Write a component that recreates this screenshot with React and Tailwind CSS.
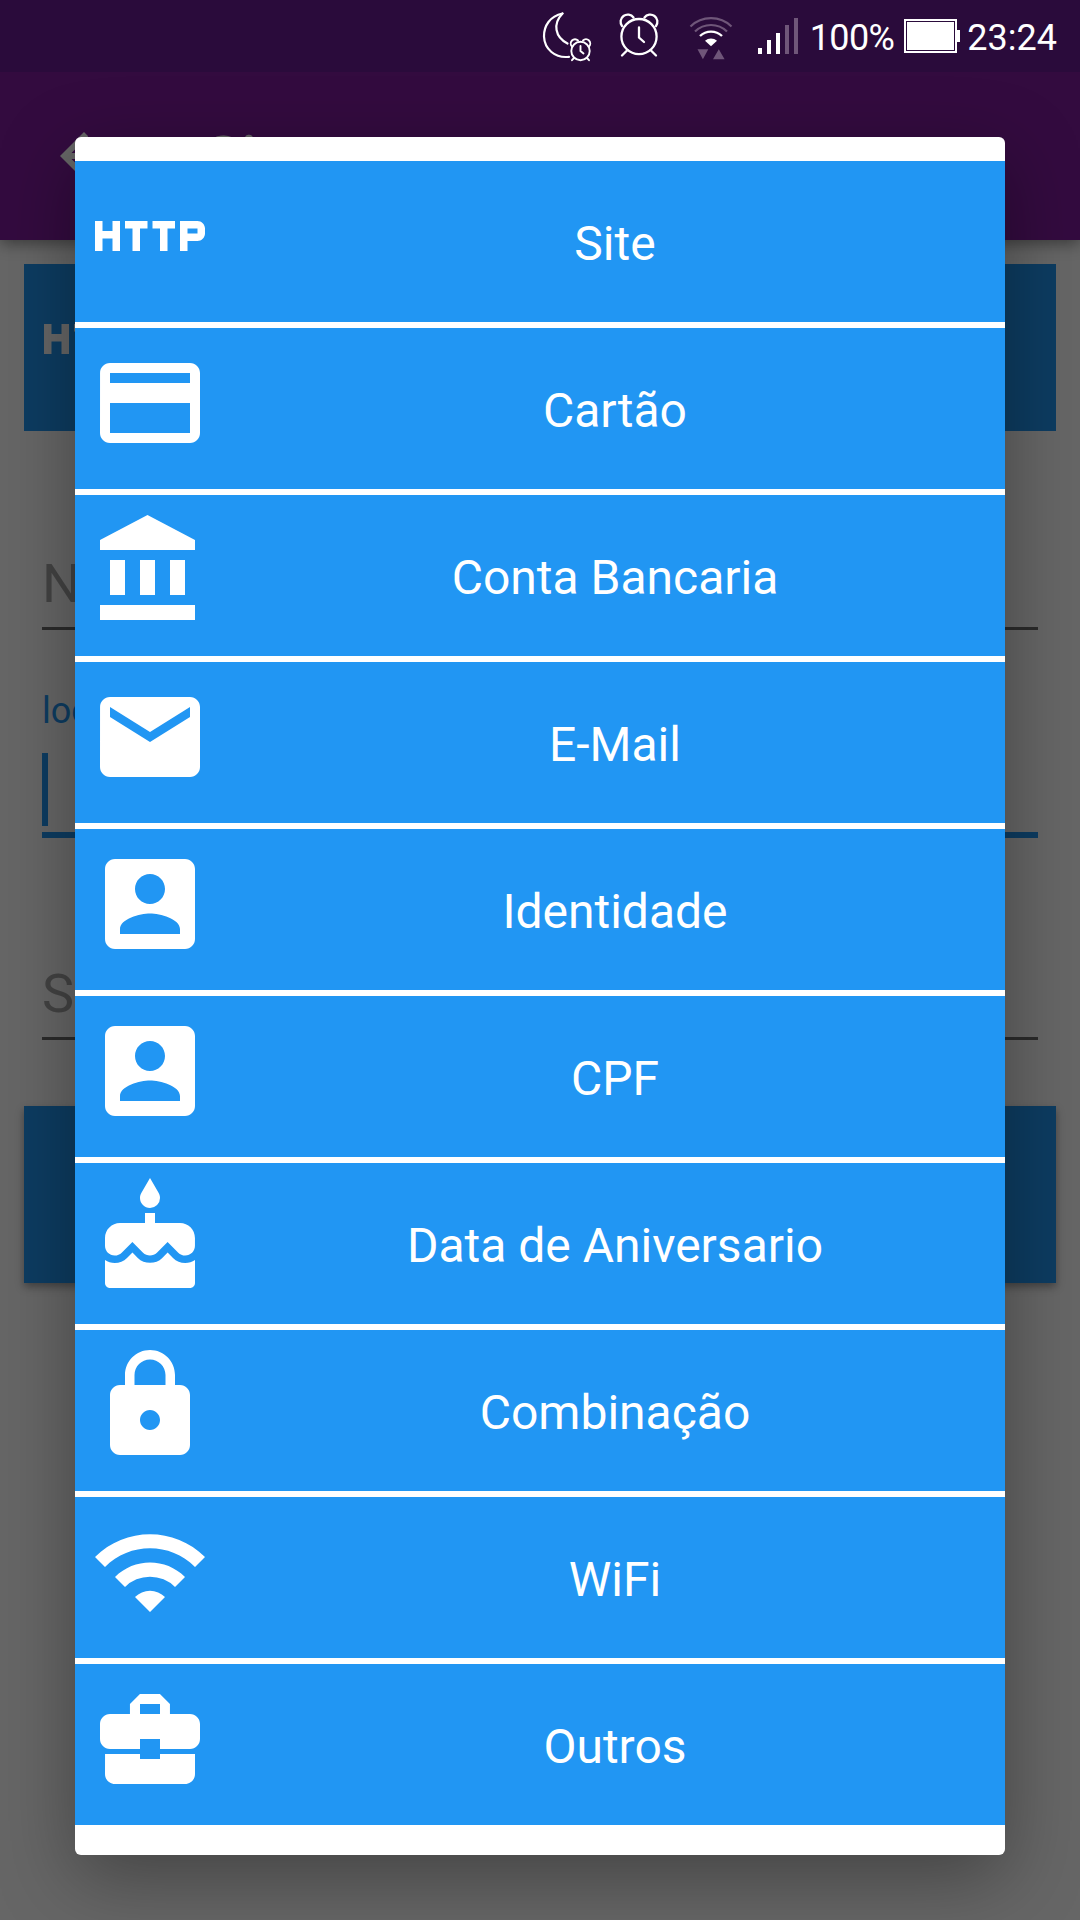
import {
  MdArrowBack,
  MdBusinessCenter,
  MdCake,
  MdCreditCard,
  MdEmail,
  MdHttp,
  MdLock,
  MdWifi,
} from 'react-icons/md';

function BankIcon({ className }) {
  return (
    <svg className={className} viewBox="0 0 24 24" fill="currentColor">
      <path d="M4 10v7h3v-7H4zm6 0v7h3v-7h-3zM2 22h19v-3H2v3zm14-12v7h3v-7h-3zm-4.500-9L2 6v2h19V6l-9.500-5z" />
    </svg>
  );
}

function AccountBoxIcon({ className }) {
  return (
    <svg className={className} viewBox="0 0 24 24" fill="currentColor">
      <path d="M3 5v14c0 1.100.890 2 2 2h14c1.100 0 2-.900 2-2V5c0-1.100-.900-2-2-2H5c-1.110 0-2 .900-2 2zm12 4c0 1.660-1.340 3-3 3s-3-1.340-3-3 1.340-3 3-3 3 1.340 3 3zm-9 8c0-2 4-3.100 6-3.100s6 1.100 6 3.100v1H6v-1z" />
    </svg>
  );
}

const options = [
  { label: 'Site', icon: MdHttp },
  { label: 'Cartão', icon: MdCreditCard },
  { label: 'Conta Bancaria', icon: BankIcon },
  { label: 'E-Mail', icon: MdEmail },
  { label: 'Identidade', icon: AccountBoxIcon },
  { label: 'CPF', icon: AccountBoxIcon },
  { label: 'Data de Aniversario', icon: MdCake },
  { label: 'Combinação', icon: MdLock },
  { label: 'WiFi', icon: MdWifi },
  { label: 'Outros', icon: MdBusinessCenter },
];

function MoonAlarmIcon() {
  return (
    <svg width="52" height="54" viewBox="0 0 52 54" fill="none" stroke="currentColor" strokeWidth="2.200" strokeLinecap="round">
      <path d="M21.500 3.500C9 6 2.800 16 3 26.500C3.500 39 14 48.500 28 46.800" />
      <path d="M21.500 3.500C11.500 14 14 27 26.500 33.500" />
      <g strokeWidth="1.900">
        <circle cx="39.500" cy="41" r="9.200" />
        <path d="M39.500 36v5l3 2.500M31 36.500a4 4 0 0 1 6-6M42 30.500a4 4 0 0 1 6 6M33 48l-2 2.200M46 48l2 2.200" />
      </g>
    </svg>
  );
}

function AlarmIcon() {
  return (
    <svg width="44" height="48" viewBox="0 0 44 48" fill="none" stroke="currentColor" strokeWidth="2.300" strokeLinecap="round">
      <circle cx="22" cy="24.600" r="17.600" />
      <path d="M22 15.500v10l5 4.500" />
      <path d="M5 14a7 7 0 0 1 11.500-8.500M27.500 5.500a7 7 0 0 1 11.500 8.500" />
      <path d="M10.500 38l-5.500 5.500M33.500 38l5.500 5.500" />
    </svg>
  );
}

function SignalWifiIcon() {
  return (
    <svg width="44" height="46" viewBox="0 0 44 46" fill="none">
      <g stroke="#6f5679" strokeWidth="2.200">
        <path d="M1.500 12.500a29.500 29.500 0 0 1 41 0" />
        <path d="M6 17.500a23 23 0 0 1 32 0" />
      </g>
      <path d="M11 22a16 16 0 0 1 22 0" stroke="#fff" strokeWidth="2.400" />
      <path d="M16 26.700a9.500 9.500 0 0 1 12 0L22 32.300z" fill="#fff" />
      <path d="M8.500 35.300h10.800L13.900 45.300zM24 45.300h11.600L29.800 35.300z" fill="#6f5679" />
    </svg>
  );
}

function SignalBars() {
  return (
    <div className="flex h-9 items-end gap-[5px]">
      <div className="h-1.5 w-1 bg-white" />
      <div className="h-3.5 w-1 bg-white" />
      <div className="h-[21px] w-1 bg-white" />
      <div className="h-[29px] w-1 bg-[#6f5679]" />
      <div className="h-9 w-1 bg-[#6f5679]" />
    </div>
  );
}

function Battery() {
  return (
    <div className="flex items-center">
      <div className="h-[34px] w-[53px] border-2 border-white p-px">
        <div className="h-full w-full bg-white" />
      </div>
      <div className="h-3 w-[3px] bg-white" />
    </div>
  );
}

function StatusBar() {
  return (
    <div className="flex h-[72px] items-center justify-end pr-[23px] text-[36px] leading-none text-white">
      <div className="pt-[2px]">
        <MoonAlarmIcon />
      </div>
      <div className="ml-6">
        <AlarmIcon />
      </div>
      <div className="ml-7 pt-[1px]">
        <SignalWifiIcon />
      </div>
      <div className="ml-[25px]">
        <SignalBars />
      </div>
      <span className="ml-3 pt-1 tracking-[-0.6px]">100%</span>
      <div className="ml-2.5">
        <Battery />
      </div>
      <span className="ml-[7px] pt-1">23:24</span>
    </div>
  );
}

function AccountForm() {
  return (
    <main className="px-6 pt-6">
      <div className="flex h-[167px] bg-[#2196f3] p-[15px] text-white">
        <MdHttp className="size-[120px]" />
      </div>

      <div className="mt-[120px] px-[18px]">
        <div className="h-[79px] border-b-[3px] border-[#6b6b6b] text-[54px] leading-[66px] text-[#a9a9a9]">Nome</div>
        <div className="mt-[57px] text-[36px] leading-[48px] text-[#2196f3]">local</div>
        <div className="mt-[18px] h-[85px] border-b-[6px] border-[#2196f3]">
          <div className="h-[73px] w-1.5 bg-[#2196f3]" />
        </div>
        <div className="mt-[123px] h-[79px] border-b-[3px] border-[#6b6b6b] text-[54px] leading-[66px] text-[#a9a9a9]">Senha</div>
      </div>

      <div className="mt-[66px] h-[177px] bg-[#2196f3] shadow-[0_4px_8px_rgba(0,0,0,0.35)]" />
    </main>
  );
}

function TypeDialog() {
  return (
    <div className="w-[930px] rounded-md bg-white pt-6 pb-[30px] shadow-[0_22px_76px_rgba(0,0,0,0.34)]">
      <div className="flex flex-col gap-1.5">
        {options.map(({ label, icon: Icon }) => (
          <button key={label} className="flex h-[161px] items-start bg-[#2196f3] pt-[15px] pl-[15px] text-white">
            <Icon className="size-[120px] shrink-0" />
            <span className="ml-[15px] flex-1 pt-0.5 text-center text-[48px] leading-[132px]">{label}</span>
          </button>
        ))}
      </div>
    </div>
  );
}

export default function App() {
  return (
    <div className="relative h-[1920px] w-[1080px] overflow-hidden bg-[#fefefe] font-['Roboto',sans-serif]">
      <div className="absolute inset-x-0 top-0 h-[72px] bg-[#2a0b3b]" />
      <div className="flex h-full flex-col pt-[72px]">
        <header className="flex h-[168px] shrink-0 items-center bg-[#7f1c9e] pl-12 text-white shadow-[0_4px_14px_rgba(0,0,0,0.4)]">
          <MdArrowBack className="size-[72px]" />
          <h1 className="ml-[85px] pt-[3px] text-[60px] font-medium">Site</h1>
        </header>
        <AccountForm />
      </div>

      <div className="absolute inset-x-0 top-[72px] bottom-0 flex justify-center bg-black/60 pt-[65px]">
        <div>
          <TypeDialog />
        </div>
      </div>

      <div className="absolute inset-x-0 top-0">
        <StatusBar />
      </div>
    </div>
  );
}
